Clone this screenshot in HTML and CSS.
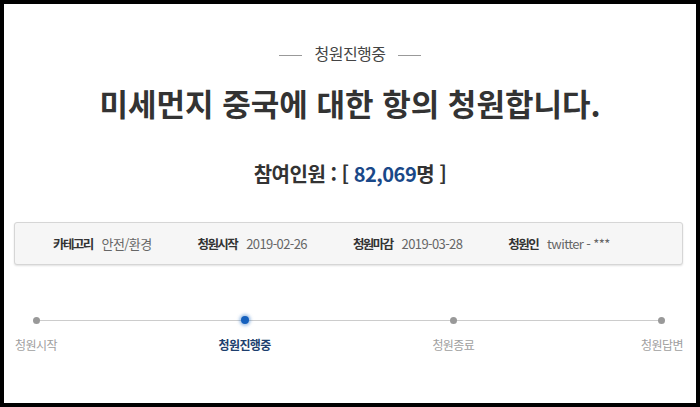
FILE: index.html
```html
<!doctype html>
<html lang="ko">
  <head>
    <meta charset="UTF-8">
    <meta name="viewport" content="width=device-width, initial-scale=1.0">
    <title>청원진행중 - 미세먼지 중국에 대한 항의 청원합니다.</title>
    <link rel="stylesheet" href="styles.css">
  </head>
  <body>
    <div class="frame">
      <!-- Petition header -->
      <p class="status">청원진행중</p>
      <h1 class="title">미세먼지 중국에 대한 항의 청원합니다.</h1>
      <p class="count">참여인원 : [ <span class="count-num">82,069</span>명 ]</p>

      <!-- Petition info -->
      <ul class="info">
        <li><strong>카테고리</strong><span>안전/환경</span></li>
        <li><strong>청원시작</strong><span>2019-02-26</span></li>
        <li><strong>청원마감</strong><span>2019-03-28</span></li>
        <li><strong>청원인</strong><span>twitter - ***</span></li>
      </ul>

      <!-- Progress steps -->
      <ol class="steps">
        <li class="step"><i class="dot"></i><span>청원시작</span></li>
        <li class="step active"><i class="dot"></i><span>청원진행중</span></li>
        <li class="step"><i class="dot"></i><span>청원종료</span></li>
        <li class="step"><i class="dot"></i><span>청원답변</span></li>
      </ol>
    </div>
  </body>
</html>
```

FILE: styles.css
```css
body {
  margin: 0;
  font-family: "Noto Sans CJK KR", "Noto Sans", sans-serif;
  color: #333;
  background: #000;
}
.frame {
  height: 407px;
  box-sizing: border-box;
  border: 4px solid #000;
  background: #fff;
  overflow: hidden;
}
.status {
  margin: 39px 0 0;
  text-align: center;
  font-size: 16px;
  line-height: 20px;
  letter-spacing: -0.5px;
  color: #444;
}
.status::before,
.status::after {
  content: "";
  display: inline-block;
  width: 23px;
  height: 1px;
  background: #999;
  vertical-align: middle;
  margin: 0 12px;
}
.title {
  margin: 22px 0 0;
  text-align: center;
  font-size: 31px;
  line-height: 36px;
  font-weight: 700;
  color: #333;
}
.count {
  margin: 40px 0 0;
  text-align: center;
  font-size: 20px;
  line-height: 26px;
  font-weight: 700;
  letter-spacing: -0.5px;
}
.count-num {
  color: #1a4888;
}
.info {
  list-style: none;
  margin: 35px 13px 0 10px;
  padding: 0 0 0 38px;
  height: 43px;
  box-sizing: border-box;
  display: flex;
  align-items: center;
  gap: 46px;
  background: #f6f6f6;
  border: 1px solid #d6d6d6;
  border-radius: 3px;
  box-shadow: 0 1px 2px rgba(0, 0, 0, 0.12);
}
.info li {
  display: flex;
  align-items: center;
  gap: 9px;
  font-size: 13px;
  line-height: 18px;
}
.info strong {
  font-size: 12.5px;
  letter-spacing: -1.6px;
  color: #333;
}
.info span {
  color: #666;
  letter-spacing: -0.6px;
}
.steps {
  position: relative;
  list-style: none;
  margin: 51px 4px 0 2px;
  padding: 0;
  display: flex;
  justify-content: space-between;
}
.steps::before {
  content: "";
  position: absolute;
  left: 30px;
  right: 30px;
  top: 4px;
  height: 1px;
  background: #ccc;
}
.step {
  position: relative;
  width: 60px;
  display: flex;
  flex-direction: column;
  align-items: center;
}
.dot {
  width: 7px;
  height: 7px;
  margin: 1px 0 12px;
  border-radius: 50%;
  background: #999;
}
.step span {
  font-size: 12px;
  line-height: 18px;
  letter-spacing: -0.6px;
  color: #a0a0a0;
  white-space: nowrap;
}
.step.active .dot {
  width: 8px;
  height: 8px;
  margin: 0 0 12px;
  background: #1560bd;
  box-shadow: 0 0 3px 2px rgba(21, 96, 189, 0.35);
}
.step.active span {
  color: #1d3f6e;
  font-weight: 700;
}
```
